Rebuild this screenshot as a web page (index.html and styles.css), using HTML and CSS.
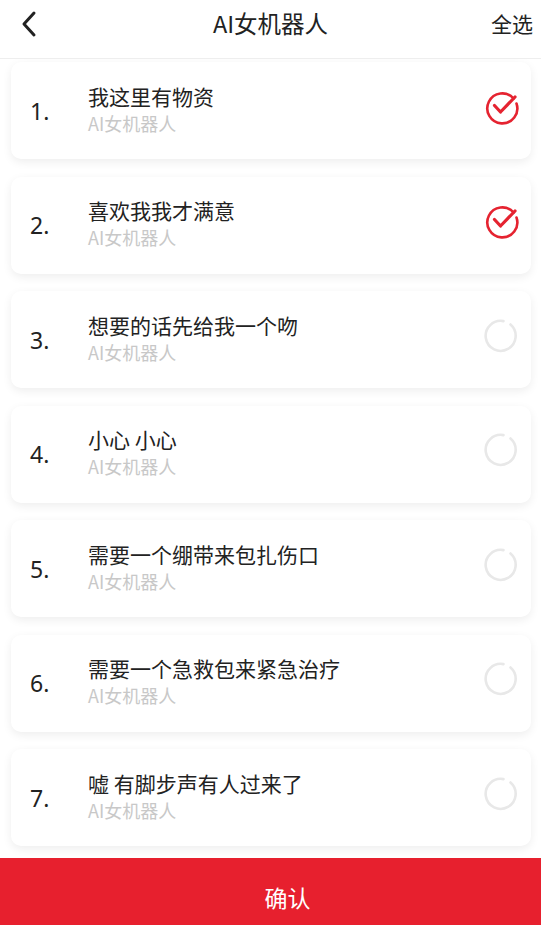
FILE: index.html
```html
<!DOCTYPE html>
<html lang="zh">
<head>
<meta charset="utf-8">
<link rel="stylesheet" href="styles.css">
</head>
<body>
<div class="page">
  <header class="topbar">
    <div class="back">
      <svg width="20" height="28" viewBox="0 0 20 28"><path d="M15 3 L5 14 L15 25" fill="none" stroke="#222" stroke-width="3" stroke-linecap="round" stroke-linejoin="round"/></svg>
    </div>
    <div class="title">AI女机器人</div>
    <div class="all">全选</div>
  </header>
  <main class="list">
    <div class="card"><div class="num">1.</div><div class="info"><div class="t">我这里有物资</div><div class="s">AI女机器人</div></div><div class="mark on"><svg width="36" height="36" viewBox="0 0 36 36"><path d="M29.6 9.5 A15 15 0 1 0 32.5 14.5" fill="none" stroke="#e52330" stroke-width="2.6" stroke-linecap="round"/><path d="M10.5 16.5 L16.5 23 L31 8" fill="none" stroke="#e52330" stroke-width="3.2" stroke-linecap="round" stroke-linejoin="round"/></svg></div></div>
    <div class="card"><div class="num">2.</div><div class="info"><div class="t">喜欢我我才满意</div><div class="s">AI女机器人</div></div><div class="mark on"><svg width="36" height="36" viewBox="0 0 36 36"><path d="M29.6 9.5 A15 15 0 1 0 32.5 14.5" fill="none" stroke="#e52330" stroke-width="2.6" stroke-linecap="round"/><path d="M10.5 16.5 L16.5 23 L31 8" fill="none" stroke="#e52330" stroke-width="3.2" stroke-linecap="round" stroke-linejoin="round"/></svg></div></div>
    <div class="card"><div class="num">3.</div><div class="info"><div class="t">想要的话先给我一个吻</div><div class="s">AI女机器人</div></div><div class="mark"><svg width="36" height="36" viewBox="0 0 36 36"><path d="M26.5 6.5 A15 15 0 1 1 19.5 3.1" fill="none" stroke="#e8e8e8" stroke-width="2.6" stroke-linecap="round"/></svg></div></div>
    <div class="card"><div class="num">4.</div><div class="info"><div class="t">小心 小心</div><div class="s">AI女机器人</div></div><div class="mark"><svg width="36" height="36" viewBox="0 0 36 36"><path d="M26.5 6.5 A15 15 0 1 1 19.5 3.1" fill="none" stroke="#e8e8e8" stroke-width="2.6" stroke-linecap="round"/></svg></div></div>
    <div class="card"><div class="num">5.</div><div class="info"><div class="t">需要一个绷带来包扎伤口</div><div class="s">AI女机器人</div></div><div class="mark"><svg width="36" height="36" viewBox="0 0 36 36"><path d="M26.5 6.5 A15 15 0 1 1 19.5 3.1" fill="none" stroke="#e8e8e8" stroke-width="2.6" stroke-linecap="round"/></svg></div></div>
    <div class="card"><div class="num">6.</div><div class="info"><div class="t">需要一个急救包来紧急治疗</div><div class="s">AI女机器人</div></div><div class="mark"><svg width="36" height="36" viewBox="0 0 36 36"><path d="M26.5 6.5 A15 15 0 1 1 19.5 3.1" fill="none" stroke="#e8e8e8" stroke-width="2.6" stroke-linecap="round"/></svg></div></div>
    <div class="card"><div class="num">7.</div><div class="info"><div class="t">嘘 有脚步声有人过来了</div><div class="s">AI女机器人</div></div><div class="mark"><svg width="36" height="36" viewBox="0 0 36 36"><path d="M26.5 6.5 A15 15 0 1 1 19.5 3.1" fill="none" stroke="#e8e8e8" stroke-width="2.6" stroke-linecap="round"/></svg></div></div>
  </main>
  <footer class="confirm">确认</footer>
</div>
</body>
</html>
```
FILE: styles.css
```css
* { box-sizing: border-box; }
html, body { margin: 0; padding: 0; }
body {
  font-family: "Noto Sans CJK SC", "Noto Sans", sans-serif;
  background: #fff;
  color: #222;
  width: 541px;
  height: 925px;
  overflow: hidden;
}
.page {
  display: flex;
  flex-direction: column;
  height: 925px;
}
.topbar {
  height: 59px;
  display: flex;
  align-items: center;
  border-bottom: 1px solid #eeeeee;
  flex: none;
}
.back {
  width: 70px;
  padding-left: 19px;
  display: flex;
  align-items: center;
  margin-top: -10px;
}
.title {
  flex: 1;
  text-align: center;
  font-size: 23.5px;
  color: #222;
  margin-top: -13px;
}
.all {
  width: 70px;
  text-align: right;
  padding-right: 8px;
  font-size: 21px;
  color: #222;
  margin-top: -12px;
}
.list {
  flex: 1;
  display: flex;
  flex-direction: column;
  gap: 17.5px;
  padding: 3px 10px 0 11px;
  overflow: hidden;
}
.card {
  flex: none;
  height: 97px;
  background: #fff;
  border-radius: 10px;
  box-shadow: 0 3px 10px rgba(0, 0, 0, 0.07);
  display: flex;
  align-items: center;
  padding: 0 11px 0 19px;
}
.num {
  width: 58px;
  font-size: 23px;
  color: #222;
  font-family: "Noto Sans", "Noto Sans CJK SC", sans-serif;
}
.info {
  flex: 1;
  display: flex;
  flex-direction: column;
  margin-top: -2px;
}
.t {
  font-size: 21px;
  line-height: 27px;
  color: #222;
}
.s {
  font-size: 18px;
  line-height: 27px;
  color: #c8c8c8;
}
.mark {
  width: 36px;
  height: 36px;
  margin-top: -8px;
}
.mark svg { display: block; }
.confirm {
  flex: none;
  height: 67px;
  background: #e7202e;
  color: #fff;
  font-size: 23px;
  display: flex;
  align-items: center;
  justify-content: center;
  padding-top: 10px;
  padding-left: 34px;
}
```
